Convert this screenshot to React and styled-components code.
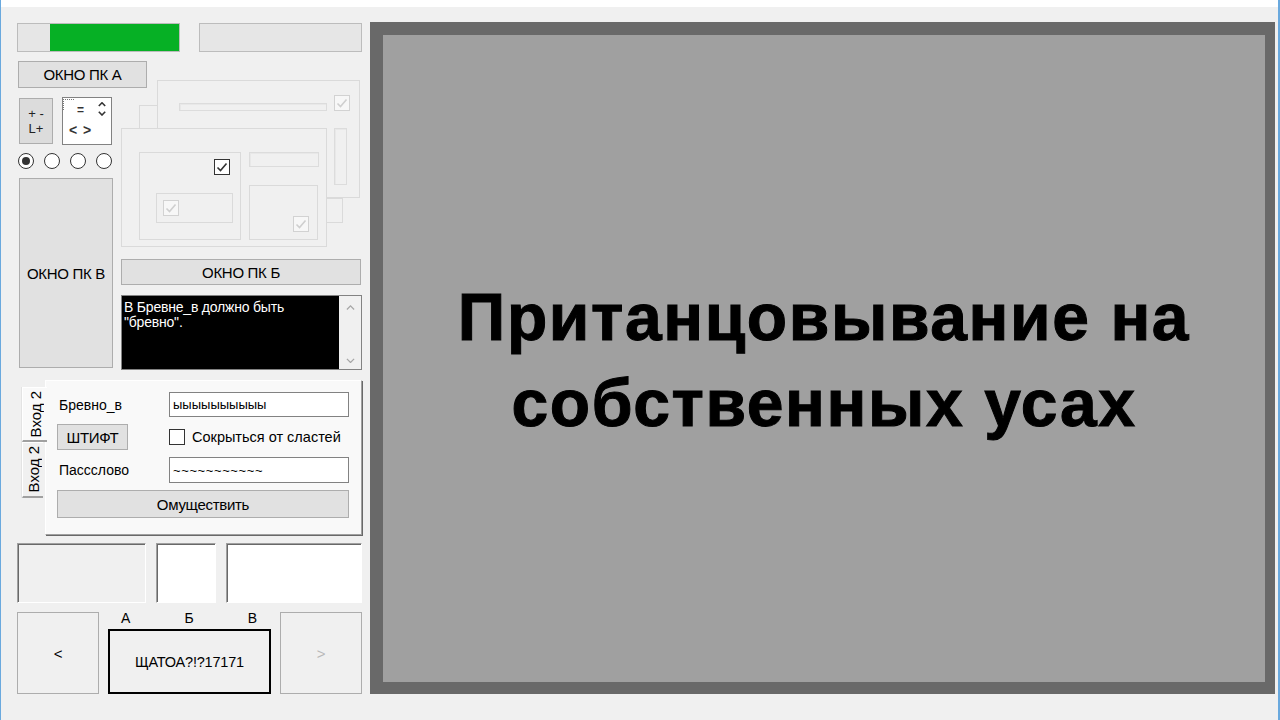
import React from "react";
import styled, { createGlobalStyle } from "styled-components";

const GlobalStyle = createGlobalStyle`
  html, body {
    margin: 0;
    padding: 0;
  }
  body {
    background: #f0f0f0;
    font-family: "Liberation Sans", Arial, sans-serif;
    font-size: 14px;
    color: #000;
  }
`;

const Window = styled.div`
  width: 1280px;
  height: 720px;
  box-sizing: border-box;
  border-left: 1px solid #6aa9de;
  border-right: 2px solid #6aa9de;
  background: #f0f0f0;
  overflow: hidden;
`;

const TitleEdge = styled.div`
  height: 7px;
  background: #fff;
`;

const Body = styled.div`
  display: flex;
  gap: 8px;
  padding: 15px 0 0 16px;
`;

const LeftColumn = styled.div`
  width: 345px;
  display: flex;
  flex-direction: column;
`;

/* ---------- progress bars ---------- */

const BarsRow = styled.div`
  display: flex;
  gap: 19px;
  margin-top: 1px;
  height: 29px;
`;

const Progress = styled.div`
  width: 163px;
  box-sizing: border-box;
  border: 1px solid #bcbcbc;
  background: #e6e6e6;
  display: flex;
`;

const ProgressFill = styled.div`
  margin-left: ${(p) => p.$offset}px;
  flex: 1;
  background: #06b025;
`;

/* ---------- buttons ---------- */

const Button = styled.div`
  box-sizing: border-box;
  width: ${(p) => p.$w}px;
  height: ${(p) => p.$h}px;
  margin-left: ${(p) => p.$ml || 0}px;
  margin-top: ${(p) => p.$mt || 0}px;
  border: 1px solid #adadad;
  background: ${(p) => (p.$flat ? "#f0f0f0" : "#e1e1e1")};
  color: ${(p) => (p.$disabled ? "#b8b8b8" : "#000")};
  display: flex;
  align-items: center;
  justify-content: center;
  font-size: 15px;
  letter-spacing: -0.3px;
  flex-shrink: 0;
`;

/* ---------- middle block ---------- */

const MidGrid = styled.div`
  display: grid;
  grid-template-columns: 103px 242px;
  margin-top: 9px;
  height: 309px;
`;

const MidLeft = styled.div`
  display: flex;
  flex-direction: column;
  position: relative;
  z-index: 1;
`;

const MidRight = styled.div`
  display: flex;
  flex-direction: column;
`;

const ToolsRow = styled.div`
  display: flex;
  align-items: flex-start;
  margin-top: 9px;
  gap: 9px;
`;

const ToolButton = styled.div`
  box-sizing: border-box;
  width: 34px;
  height: 46px;
  margin-left: 2px;
  margin-top: 1px;
  border: 1px solid #adadad;
  background: #dcdcdc;
  display: flex;
  flex-direction: column;
  align-items: center;
  justify-content: center;
  font-size: 13px;
  line-height: 15px;
  color: #222;
`;

const ToolBox = styled.div`
  box-sizing: border-box;
  width: 50px;
  height: 48px;
  border: 1px solid #828282;
  background: #fff;
  display: grid;
  grid-template-columns: 30px 18px;
  grid-template-rows: 24px 22px;
  font-size: 12px;
  font-weight: bold;
  color: #333;
`;

const DotMark = styled.div`
  display: flex;
  align-items: flex-start;
  gap: 3px;
  line-height: 14px;

  span:first-child {
    width: 10px;
    height: 10px;
    margin-top: 1px;
    border-left: 1px dotted #777;
    border-top: 1px dotted #777;
  }
  span:last-child {
    margin-top: 5px;
  }
`;

const SpinCell = styled.div`
  display: flex;
  flex-direction: column;
  align-items: center;
  gap: 4px;
  padding-top: 4px;
`;

const ArrowsCell = styled.div`
  grid-column: 1 / span 2;
  padding-left: 6px;
  font-size: 14px;
  line-height: 16px;
  letter-spacing: 1px;
`;

const RadioRow = styled.div`
  display: flex;
  gap: 10px;
  margin-top: 8px;
  padding-left: 1px;
`;

const Radio = styled.div`
  box-sizing: border-box;
  width: 16px;
  height: 16px;
  border-radius: 50%;
  border: 1px solid #333;
  background: #fff;
  display: flex;
  align-items: center;
  justify-content: center;

  &::after {
    content: "";
    width: 8px;
    height: 8px;
    border-radius: 50%;
    background: ${(p) => (p.$checked ? "#333" : "transparent")};
  }
`;

/* ---------- designer surface with stacked group frames ---------- */

const DesignSurface = styled.div`
  position: relative;
  height: 187px;
`;

const Frame = styled.div`
  position: absolute;
  box-sizing: border-box;
  left: ${(p) => p.$x}px;
  top: ${(p) => p.$y}px;
  width: ${(p) => p.$w}px;
  height: ${(p) => p.$h}px;
  border: 1px solid #dadada;
  background: #f0f0f0;
`;

const GhostBar = styled(Frame)`
  border-color: #dcdcdc;
  box-shadow: inset 1px 1px 0 #e8e8e8;
`;

const CheckSpot = styled.div`
  position: absolute;
  left: ${(p) => p.$x}px;
  top: ${(p) => p.$y}px;
  box-sizing: border-box;
  width: 16px;
  height: 16px;
  border: 1px solid ${(p) => (p.$active ? "#333" : "#d2d2d2")};
  background: ${(p) => (p.$active ? "#fff" : "#f7f7f7")};
  display: flex;
  align-items: center;
  justify-content: center;
`;

const Tick = ({ color }) => (
  <svg width="12" height="12" viewBox="0 0 12 12">
    <polyline
      points="1.5,6.5 4.5,9.5 10.5,2.5"
      fill="none"
      stroke={color}
      strokeWidth="1.6"
    />
  </svg>
);

const Chevron = ({ dir, color = "#a6a6a6", size = 9, weight = 1.4 }) => (
  <svg width={size} height={size * 0.6} viewBox="0 0 10 6">
    <polyline
      points={dir === "up" ? "1,5 5,1 9,5" : "1,1 5,5 9,1"}
      fill="none"
      stroke={color}
      strokeWidth={weight}
    />
  </svg>
);

/* ---------- message box ---------- */

const MessageBox = styled.div`
  box-sizing: border-box;
  margin-top: 10px;
  margin-left: 1px;
  width: 241px;
  height: 75px;
  border: 1px solid #828282;
  display: flex;
`;

const MessageText = styled.div`
  flex: 1;
  background: #000;
  color: #fff;
  font-size: 14px;
  line-height: 15px;
  padding: 4px 2px;
  letter-spacing: -0.2px;
`;

const ScrollTrack = styled.div`
  width: 22px;
  background: #f0f0f0;
  display: flex;
  flex-direction: column;
  justify-content: space-between;
  align-items: center;
  padding: 9px 0 6px;
`;

/* ---------- tab control ---------- */

const Tabs = styled.div`
  display: flex;
  margin-top: 8px;
  height: 157px;
`;

const TabStrip = styled.div`
  width: 28px;
  display: flex;
  flex-direction: column;
  align-items: flex-end;
  padding-top: 9px;
`;

const Tab = styled.div`
  box-sizing: border-box;
  width: ${(p) => (p.$active ? 25 : 21)}px;
  height: ${(p) => (p.$active ? 55 : 56)}px;
  margin-right: ${(p) => (p.$active ? -2 : 2)}px;
  background: ${(p) => (p.$active ? "#f9f9f9" : "#f0f0f0")};
  border-left: 1px solid #fff;
  border-top: 1px solid #fff;
  border-bottom: 2px solid #a0a0a0;
  box-shadow: -1px 0 0 #e3e3e3;
  display: flex;
  align-items: center;
  justify-content: center;
  position: relative;
  z-index: ${(p) => (p.$active ? 1 : 0)};

  span {
    writing-mode: vertical-rl;
    transform: rotate(180deg);
    font-size: 15px;
    white-space: nowrap;
  }
`;

const TabPage = styled.div`
  box-sizing: border-box;
  width: 317px;
  height: 155px;
  margin-top: 2px;
  background: #f9f9f9;
  border-top: 1px solid #fff;
  border-left: 1px solid #fff;
  border-right: 1px solid #a0a0a0;
  border-bottom: 1px solid #a0a0a0;
  box-shadow: 1px 1px 0 #696969;
  display: grid;
  grid-template-columns: 112px 180px;
  grid-template-rows: 25px 26px 26px 28px;
  row-gap: 7px;
  padding: 11px 0 0 11px;
`;

const FieldLabel = styled.div`
  display: flex;
  align-items: center;
  padding-left: 2px;
  font-size: 14px;
`;

const TextField = styled.div`
  box-sizing: border-box;
  border: 1px solid #828282;
  background: #fff;
  display: flex;
  align-items: center;
  padding: 0 3px;
  font-size: 13px;
  letter-spacing: ${(p) => p.$spacing || 0}px;
`;

const CheckRow = styled.div`
  display: flex;
  align-items: center;
  gap: 7px;
  font-size: 14.5px;
`;

const CheckBox = styled.div`
  box-sizing: border-box;
  width: 16px;
  height: 16px;
  border: 1px solid #333;
  background: #fff;
`;

const WideButton = styled(Button)`
  grid-column: 1 / span 2;
  width: 292px;
`;

/* ---------- bottom panels ---------- */

const PanelsRow = styled.div`
  display: flex;
  gap: 10px;
  margin-top: 8px;
  height: 60px;
`;

const Sunken = styled.div`
  box-sizing: border-box;
  width: ${(p) => p.$w}px;
  background: ${(p) => (p.$white ? "#fff" : "#f0f0f0")};
  border-top: 1px solid #a0a0a0;
  border-left: 1px solid #a0a0a0;
  border-right: 1px solid #fff;
  border-bottom: 1px solid #fff;
  box-shadow: inset 1px 1px 0 #696969;
`;

const NavRow = styled.div`
  display: flex;
  gap: 9px;
  margin-top: 9px;
  height: 82px;
`;

const Slots = styled.div`
  width: 164px;
  display: flex;
  flex-direction: column;
`;

const SlotLabels = styled.div`
  display: flex;
  justify-content: space-between;
  height: 17px;
  padding: 0 14px 0 13px;
  font-size: 14px;
  line-height: 12px;
`;

const SlotBox = styled.div`
  box-sizing: border-box;
  flex: 1;
  border: 2px solid #000;
  display: flex;
  align-items: center;
  justify-content: center;
  font-size: 14.5px;
  letter-spacing: -0.2px;
`;

/* ---------- display screen ---------- */

const Screen = styled.div`
  box-sizing: border-box;
  width: 905px;
  height: 672px;
  background: #a0a0a0;
  border: 13px solid #696969;
  border-right-width: 10px;
  border-bottom-width: 12px;
  display: flex;
  align-items: center;
  justify-content: center;
`;

const Headline = styled.div`
  font-family: "Liberation Sans", Arial, sans-serif;
  font-weight: bold;
  font-size: 66px;
  line-height: 86px;
  text-align: center;
  color: #000;
  letter-spacing: 1.6px;
  -webkit-text-stroke: 1px #000;
  padding-top: 2px;
`;

export default function App() {
  return (
    <>
      <GlobalStyle />
      <Window>
        <TitleEdge />
        <Body>
          <LeftColumn>
            <BarsRow>
              <Progress>
                <ProgressFill $offset={32} />
              </Progress>
              <Progress />
            </BarsRow>

            <MidGrid>
              <MidLeft>
                <Button $w={129} $h={27} $ml={1}>
                  ОКНО ПК А
                </Button>
                <ToolsRow>
                  <ToolButton>
                    <span>+ -</span>
                    <span>L+</span>
                  </ToolButton>
                  <ToolBox>
                    <DotMark>
                      <span />
                      <span>=</span>
                    </DotMark>
                    <SpinCell>
                      <Chevron dir="up" color="#333" size={8} weight={2} />
                      <Chevron dir="down" color="#333" size={8} weight={2} />
                    </SpinCell>
                    <ArrowsCell>&lt; &gt;</ArrowsCell>
                  </ToolBox>
                </ToolsRow>
                <RadioRow>
                  <Radio $checked />
                  <Radio />
                  <Radio />
                  <Radio />
                </RadioRow>
                <Button $w={94} $h={190} $ml={2} $mt={9}>
                  ОКНО ПК В
                </Button>
              </MidLeft>

              <MidRight>
                <DesignSurface>
                  <Frame $x={19} $y={44} $w={20} $h={40} />
                  <Frame $x={37} $y={19} $w={203} $h={118} />
                  <GhostBar $x={59} $y={42} $w={148} $h={8} />
                  <CheckSpot $x={214} $y={34}>
                    <Tick color="#cfcfcf" />
                  </CheckSpot>
                  <GhostBar $x={214} $y={67} $w={13} $h={57} />
                  <Frame $x={180} $y={137} $w={43} $h={25} />
                  <Frame $x={1} $y={67} $w={206} $h={119} />
                  <Frame $x={19} $y={91} $w={102} $h={88} />
                  <CheckSpot $x={94} $y={98} $active>
                    <Tick color="#333" />
                  </CheckSpot>
                  <Frame $x={36} $y={132} $w={77} $h={30} />
                  <CheckSpot $x={43} $y={139}>
                    <Tick color="#cfcfcf" />
                  </CheckSpot>
                  <GhostBar $x={129} $y={91} $w={70} $h={15} />
                  <Frame $x={129} $y={124} $w={69} $h={55} />
                  <CheckSpot $x={173} $y={155}>
                    <Tick color="#cfcfcf" />
                  </CheckSpot>
                </DesignSurface>
                <Button $w={240} $h={26} $ml={1} $mt={11}>
                  ОКНО ПК Б
                </Button>
                <MessageBox>
                  <MessageText>
                    В Бревне_в должно быть
                    <br />
                    "бревно".
                  </MessageText>
                  <ScrollTrack>
                    <Chevron dir="up" />
                    <Chevron dir="down" />
                  </ScrollTrack>
                </MessageBox>
              </MidRight>
            </MidGrid>

            <Tabs>
              <TabStrip>
                <Tab $active>
                  <span>Вход 2</span>
                </Tab>
                <Tab>
                  <span>Вход 2</span>
                </Tab>
              </TabStrip>
              <TabPage>
                <FieldLabel>Бревно_в</FieldLabel>
                <TextField>ыыыыыыыыыы</TextField>
                <Button $w={71} $h={26}>
                  ШТИФТ
                </Button>
                <CheckRow>
                  <CheckBox />
                  Сокрыться от сластей
                </CheckRow>
                <FieldLabel>Пассслово</FieldLabel>
                <TextField $spacing={0.6}>~~~~~~~~~~~</TextField>
                <WideButton $h={28}>Омуществить</WideButton>
              </TabPage>
            </Tabs>

            <PanelsRow>
              <Sunken $w={129} />
              <Sunken $w={60} $white />
              <Sunken $w={136} $white />
            </PanelsRow>

            <NavRow>
              <Button $w={82} $h={82} $flat>
                &lt;
              </Button>
              <Slots>
                <SlotLabels>
                  <span>А</span>
                  <span>Б</span>
                  <span>В</span>
                </SlotLabels>
                <SlotBox>ЩАТОА?!?17171</SlotBox>
              </Slots>
              <Button $w={82} $h={82} $flat $disabled>
                &gt;
              </Button>
            </NavRow>
          </LeftColumn>

          <Screen>
            <Headline>
              Пританцовывание на
              <br />
              собственных усах
            </Headline>
          </Screen>
        </Body>
      </Window>
    </>
  );
}
